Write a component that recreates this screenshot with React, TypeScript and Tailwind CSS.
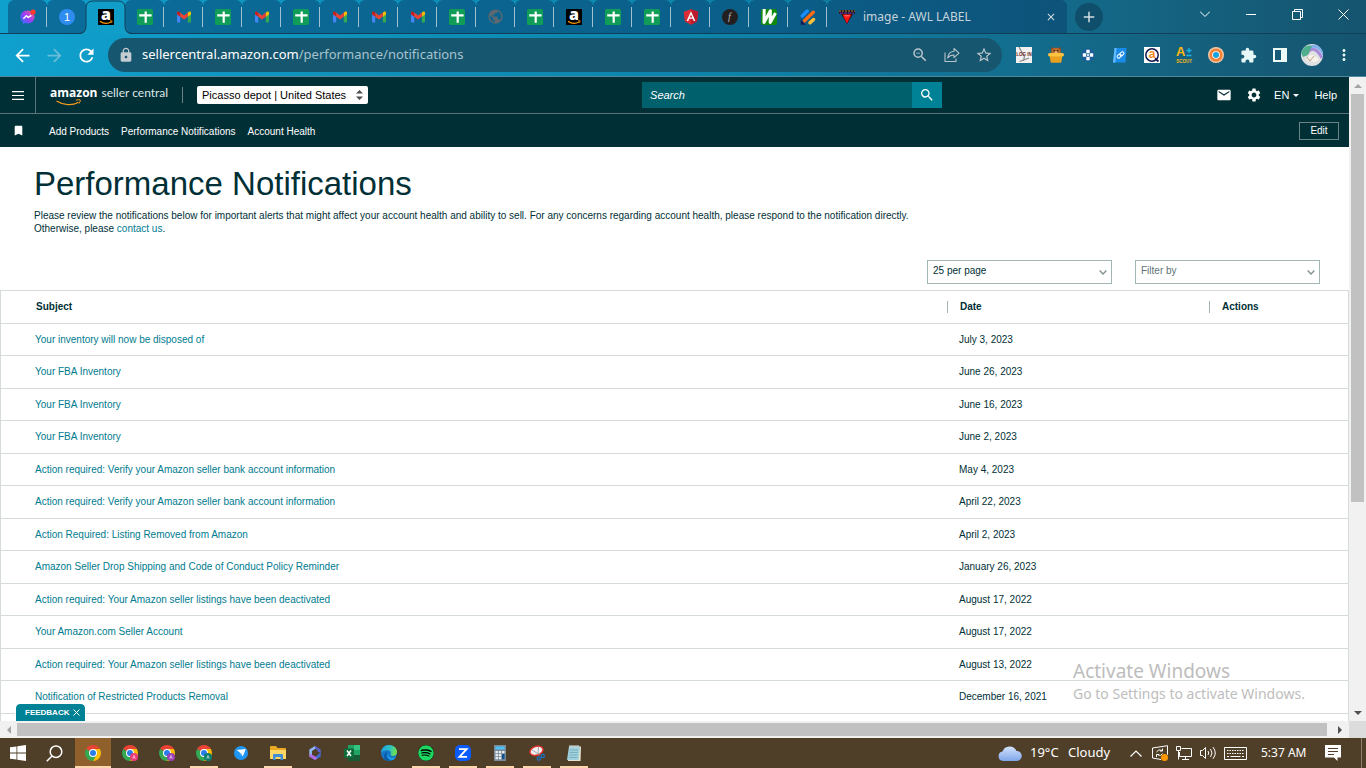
import React, { useState } from "react";
import {
  MdAdd,
  MdArrowBack,
  MdArrowForward,
  MdBookmark,
  MdClose,
  MdExtension,
  MdLock,
  MdMail,
  MdMoreVert,
  MdPublic,
  MdRefresh,
  MdSearch,
  MdSettings,
  MdStarOutline,
  MdZoomOut,
} from "react-icons/md";
import { FaSpotify } from "react-icons/fa";

/* ---------- favicons ---------- */

const SheetIcon = () => (
  <svg viewBox="0 0 16 16" className="size-4">
    <rect width="16" height="16" rx="1.6" fill="#109d58" />
    <path d="M7.6 2.4h2.2v11.4H7.6z M2.2 5.2h12.4v2.2H2.2z" fill="#fff" />
  </svg>
);

const GmailIcon = () => (
  <svg viewBox="0 0 16 16" className="size-4">
    <path d="M1 4.6 4.2 7v6.6H2a1 1 0 0 1-1-1z" fill="#4285f4" />
    <path d="M15 4.6 11.8 7v6.6H14a1 1 0 0 0 1-1z" fill="#34a853" />
    <path d="M11.8 3.6 13 2.7c.9-.6 2 0 2 1.1v1.6l-3.2 2.4z" fill="#fbbc04" />
    <path d="M4.2 3.6 3 2.7c-.9-.6-2 0-2 1.1v1.6l3.2 2.4z" fill="#c5221f" />
    <path d="M4.2 7.8V3.6L8 6.4l3.8-2.8v4.2L8 10.6z" fill="#ea4335" />
  </svg>
);

const AmazonIcon = () => (
  <svg viewBox="0 0 16 16" className="size-4 overflow-visible">
    <rect width="16" height="16" fill="#000" />
    <text x="8" y="11" textAnchor="middle" fontFamily="Open Sans, sans-serif" fontWeight="800" fontSize="16" fill="#fff">
      a
    </text>
    <path d="M2 12.2c3.6 2.6 8 2.6 11.4.5" stroke="#f90" strokeWidth="1.2" fill="none" />
    <path d="m12 11.8 2.2.1-.7 2" stroke="#f90" strokeWidth=".8" fill="none" />
  </svg>
);

const MessengerIcon = () => (
  <svg viewBox="0 0 16 16" className="size-4">
    <defs>
      <linearGradient id="msg" x1="0" y1="1" x2="1" y2="0">
        <stop offset="0" stopColor="#1f7cff" />
        <stop offset=".5" stopColor="#9a3cff" />
        <stop offset="1" stopColor="#ff5f70" />
      </linearGradient>
    </defs>
    <path d="M7.5 1.5c-4 0-7 2.900-7 6.5 0 2 .9 3.7 2.300 4.900v2.400l2.300-1.200c.8.200 1.500.3 2.400.3 4 0 7-2.800 7-6.400s-3-6.500-7-6.500z" fill="url(#msg)" />
    <path d="m3.4 9.8 2.9-3.1 2 1.7 3-2.1" stroke="#fff" strokeWidth="1.5" fill="none" strokeLinejoin="round" />
    <circle cx="13" cy="3" r="2.6" fill="#ff3b30" />
  </svg>
);

const CountIcon = () => (
  <span className="flex size-4 items-center justify-center rounded-full bg-[#2f8cf0] text-[11px] leading-4 text-white">1</span>
);

const ScriptIcon = () => (
  <span className="flex size-4 items-center justify-center rounded-full bg-[#231f20] font-['Liberation_Serif',serif] text-[10px] leading-4 text-[#b9b9b9] italic">
    f
  </span>
);

const AngularIcon = () => (
  <svg viewBox="0 0 16 16" className="size-4">
    <path d="M8 .2.7 2.7l1.2 9.800L8 15.8l6.100-3.300 1.200-9.800z" fill="#dd2c35" />
    <path d="M8 .2v15.600l6.100-3.300 1.200-9.800z" fill="#bd1c2c" />
    <path d="M8 2.2 3.600 12h1.700l.9-2.200h3.600l.9 2.200h1.700zm0 3.200 1.200 3H6.800z" fill="#fff" fillRule="evenodd" />
  </svg>
);

const WIcon = () => (
  <svg viewBox="0 0 16 16" className="size-4">
    <rect width="16" height="16" rx="2" fill="#128a0c" />
    <path d="M3.2-.2 3 13.5 9.400 1.800 9.200 13.500 14.500 4" stroke="#fff" strokeWidth="3" fill="none" strokeLinejoin="round" />
  </svg>
);

const StripesIcon = () => (
  <svg viewBox="0 0 16 16" className="size-4" strokeLinecap="round" strokeWidth="3.4">
    <path d="m2.2 7 5-5" stroke="#1a8cff" />
    <path d="M4.5 11.800 13.300 3.300" stroke="#ff6a13" />
    <path d="m10 13.800 3.500-3.300" stroke="#ffc233" />
    <path d="M.8 10.800v5h5z" fill="#101c5c" />
  </svg>
);

const AwlIcon = () => (
  <svg viewBox="0 0 16 14" className="h-3.5 w-4">
    <path d="M0 0h16v3.600H0z" fill="#1a1020" />
    <path d="M0 1h16" stroke="#c8a23a" strokeWidth=".9" strokeDasharray="2 1" />
    <path d="M1 3h14" stroke="#8a2aa8" strokeWidth="1" strokeDasharray="3 1" />
    <path d="M2 4h12L8 14z" fill="#3a0b14" />
    <path d="M3.600 4.600h8.800L8 13.400z" fill="#ff1212" />
    <path d="M5.500 5.800h5" stroke="#ff9a9a" strokeWidth=".8" />
  </svg>
);

const GlobeIcon = () => <MdPublic className="size-[17px] text-[#5d6870]" />;

type Tab = { title: string; Icon: React.FC };

const pinnedTabs: Tab[] = [
  { title: "Messenger", Icon: MessengerIcon },
  { title: "Messages", Icon: CountIcon },
  { title: "Seller Central", Icon: AmazonIcon },
  { title: "Sheet 1", Icon: SheetIcon },
  { title: "Mail 1", Icon: GmailIcon },
  { title: "Sheet 2", Icon: SheetIcon },
  { title: "Mail 2", Icon: GmailIcon },
  { title: "Sheet 3", Icon: SheetIcon },
  { title: "Mail 3", Icon: GmailIcon },
  { title: "Mail 4", Icon: GmailIcon },
  { title: "Mail 5", Icon: GmailIcon },
  { title: "Sheet 4", Icon: SheetIcon },
  { title: "New page", Icon: GlobeIcon },
  { title: "Sheet 5", Icon: SheetIcon },
  { title: "Amazon", Icon: AmazonIcon },
  { title: "Sheet 6", Icon: SheetIcon },
  { title: "Sheet 7", Icon: SheetIcon },
  { title: "Angular", Icon: AngularIcon },
  { title: "Script", Icon: ScriptIcon },
  { title: "W", Icon: WIcon },
  { title: "Stripes", Icon: StripesIcon },
];

const activeTab = 2;

function TabStrip() {
  return (
    <div className="flex h-[34px] shrink-0 border-b border-[#123f57] pl-2">
      {pinnedTabs.map(({ title, Icon }, i) =>
        i === activeTab ? (
          <button key={title} aria-label={title} className="relative z-10 -mb-px flex h-[34px] w-[39px] shrink-0 items-center justify-center">
            <svg viewBox="0 0 55 34" className="absolute top-0 -left-2 h-[34px] w-[55px]">
              <path d="M1 34q7 0 7-7V8q0-7 7-7h25q7 0 7 7v19q0 7 7 7z" fill="#109dc8" />
              <path d="M0 33.5q8 0 8-7V8q0-7 7-7h25q7 0 7 7v18.5q0 7 8 7" fill="none" stroke="#123f57" />
            </svg>
            <span className="relative">
              <Icon />
            </span>
          </button>
        ) : (
          <button key={title} aria-label={title} className="flex h-[33px] w-[39px] shrink-0 items-center rounded-t-md bg-[#083c69]/50">
            <span className="flex flex-1 justify-center pl-px">
              <Icon />
            </span>
            {i !== activeTab - 1 && <span className="h-5 w-px bg-[#9fc0cf]" />}
          </button>
        ),
      )}
      <div className="flex h-[33px] w-60 items-center rounded-t-md bg-[#083c69]/50 pl-3">
        <AwlIcon />
        <span className="ml-2 flex-1 font-['Noto_Sans',sans-serif] text-xs text-[#c6d3da]">image - AWL LABEL</span>
        <button aria-label="Close tab" className="mr-2.5">
          <MdClose className="size-3 text-[#d5dfe4]" />
        </button>
      </div>
      <button aria-label="New tab" className="mt-[3px] ml-2 flex size-7 items-center justify-center rounded-full bg-[#0f4f6c]">
        <MdAdd className="size-[18px] text-[#d5dfe4]" />
      </button>
      <div className="ml-auto flex h-7 text-white">
        <button aria-label="Search tabs" className="flex w-[46px] items-center justify-center">
          <svg viewBox="0 0 10 10" width="10" height="10" fill="none" stroke="currentColor">
            <path d="m0 2.5 5 5 5-5" />
          </svg>
        </button>
        <button aria-label="Minimise" className="flex w-[46px] items-center justify-center">
          <span className="h-px w-2.5 bg-white" />
        </button>
        <button aria-label="Restore" className="flex w-[46px] items-center justify-center">
          <svg viewBox="0 0 11 11" width="11" height="11" fill="none" stroke="currentColor">
            <path d="M.5 2.5h8v8h-8z M2.5 2.5v-2h8v8h-2" />
          </svg>
        </button>
        <button aria-label="Close" className="flex w-[46px] items-center justify-center">
          <svg viewBox="0 0 11 11" width="11" height="11" fill="none" stroke="currentColor">
            <path d="m.5.5 10 10m0-10-10 10" />
          </svg>
        </button>
      </div>
    </div>
  );
}

/* ---------- extensions ---------- */

const extensions: { name: string; art: React.ReactNode }[] = [
  {
    name: "Log in",
    art: (
      <svg viewBox="0 0 16 16" className="size-4 overflow-visible">
        <rect width="16" height="16" fill="#f1f1f1" />
        <path d="M3 0 8 9M3.5 14.5 13 11M8.5 9l-1 5" stroke="#888" strokeWidth="1.2" />
        <text x="8" y="8.5" textAnchor="middle" fontFamily="Liberation Sans, sans-serif" fontWeight="700" fontSize="4.5" fill="#6e1e1e">
          LOG IN
        </text>
      </svg>
    ),
  },
  {
    name: "Honey jar",
    art: (
      <svg viewBox="0 0 16 16" className="size-4">
        <circle cx="4.5" cy="2" r="1.7" fill="#8b4a1d" />
        <circle cx="11.5" cy="2" r="1.7" fill="#8b4a1d" />
        <path d="M3 7C3 2.5 5 .8 8 .8S13 2.5 13 7z" fill="#b5692c" />
        <circle cx="6.3" cy="3.7" r=".7" fill="#2a1508" />
        <circle cx="9.7" cy="3.7" r=".7" fill="#2a1508" />
        <ellipse cx="8" cy="5.2" rx="1.6" ry="1" fill="#e8b27c" />
        <path d="M1.5 7.5h13l-1 7q0 1.2-1.5 1.2H4q-1.5 0-1.5-1.2z" fill="#e8a21f" />
        <rect y="6" width="16" height="3.4" rx="1.7" fill="#fbc23f" />
      </svg>
    ),
  },
  {
    name: "Cross",
    art: (
      <svg viewBox="0 0 16 16" className="size-4">
        <circle cx="8" cy="8" r="6.5" fill="#1b5d9b" />
        <path d="M6.3 2.8h3.4v3.400H6.300zM6.300 9.800h3.400v3.400H6.300zM2.800 6.300h3.400v3.400H2.800zM9.800 6.300h3.400v3.400H9.800z" fill="#fff" />
        <path d="M7 7h2v2H7z" fill="#cfe4f5" />
      </svg>
    ),
  },
  {
    name: "Link book",
    art: (
      <svg viewBox="0 0 16 16" className="size-4">
        <path d="M2.500 1h12L13.500 15.500H1z" fill="#1a8be8" />
        <path d="M2.500 1 1 15.500h2.500L4.500 1z" fill="#62baff" />
        <g stroke="#fff" fill="none" strokeWidth="1" transform="rotate(-40 8.5 8)">
          <rect x="4.5" y="6.500" width="4.600" height="3" rx="1.500" />
          <rect x="8" y="6.500" width="4.600" height="3" rx="1.500" />
        </g>
      </svg>
    ),
  },
  {
    name: "Quick view",
    art: (
      <svg viewBox="0 0 16 16" className="size-4 overflow-visible">
        <rect width="16" height="16" fill="#fff" />
        <circle cx="8" cy="8" r="6.200" fill="none" stroke="#15184f" strokeWidth="1.500" />
        <path d="m11 11.500 3.500 3" stroke="#15184f" strokeWidth="1.800" />
        <text x="8" y="11.200" textAnchor="middle" fontFamily="Liberation Sans, sans-serif" fontWeight="700" fontSize="12" fill="#f5871f">
          a
        </text>
      </svg>
    ),
  },
  {
    name: "Scout",
    art: (
      <svg viewBox="0 0 16 16" className="size-4 overflow-visible">
        <text x="0" y="9" fontFamily="Liberation Sans, sans-serif" fontWeight="700" fontSize="13" fill="#fdb913">
          A
        </text>
        <path d="M13 1v5M10.500 3.500h5M10.500 8.500h5" stroke="#1db4e8" strokeWidth="1.300" />
        <text x="8" y="15.700" textAnchor="middle" fontFamily="Liberation Sans, sans-serif" fontWeight="700" fontSize="4.500" fill="#fdb913">
          SCOUT
        </text>
      </svg>
    ),
  },
  {
    name: "Ring",
    art: (
      <svg viewBox="0 0 16 16" className="size-4">
        <circle cx="8" cy="8" r="8" fill="#f6c9a4" />
        <circle cx="8" cy="8" r="6.600" fill="#f28237" />
        <circle cx="8" cy="8" r="3.800" fill="#fff" />
        <circle cx="8" cy="8" r="3" fill="#19a3dc" />
      </svg>
    ),
  },
  { name: "Extensions", art: <MdExtension className="size-[17px] text-[#e6f7f5]" /> },
  {
    name: "Side panel",
    art: (
      <svg viewBox="0 0 14 14" className="size-3.5">
        <path d="M0 0h14v14H0zM2 2v10h6V2z" fill="#eefaf8" fillRule="evenodd" />
      </svg>
    ),
  },
  {
    name: "Profile",
    art: (
      <svg viewBox="0 0 22 22" className="size-[22px]">
        <defs>
          <clipPath id="avatar">
            <circle cx="11" cy="11" r="11" />
          </clipPath>
        </defs>
        <g clipPath="url(#avatar)">
          <rect width="22" height="22" fill="#e0e0e2" />
          <path d="M6 9C10 3 16 4 21 14" stroke="#a98ad8" strokeWidth="3" fill="none" />
          <path d="M7 5C12 0 19 2 23 11" stroke="#7fb0ec" strokeWidth="3" fill="none" />
          <path d="M0 9C2 3 6 0 11 2L7 11 2 13z" fill="#4fae8c" />
          <path d="M5 16c2-5 5-6 9-4l4 3-3 3-5-1z" fill="#f7f3ea" />
          <path d="m6 13 3 4 4-5" stroke="#b3997a" strokeWidth=".9" fill="none" />
        </g>
      </svg>
    ),
  },
  { name: "Menu", art: <MdMoreVert className="size-[18px] text-[#e6f7f5]" /> },
];

function Toolbar() {
  return (
    <div className="flex h-[43px] shrink-0 items-center border-b border-[#4f87a0] pl-1.5">
      <button aria-label="Back" className="flex w-8 justify-center text-white">
        <MdArrowBack className="size-[21px]" />
      </button>
      <button aria-label="Forward" className="flex w-8 justify-center text-[#68bcd8]">
        <MdArrowForward className="size-[21px]" />
      </button>
      <button aria-label="Reload" className="flex w-8 justify-center text-white">
        <MdRefresh className="size-[21px]" />
      </button>
      <div className="ml-1.5 flex h-[34px] flex-1 items-center rounded-full bg-[#17566f] pr-0.5 pl-2.5 font-['Noto_Sans',sans-serif] text-[13px] text-[#a6c3ce]">
        <MdLock className="size-4 text-[#c4ccd2]" />
        <div className="ml-2 flex-1">
          <span className="text-white">sellercentral.amazon.com</span>/performance/notifications
        </div>
        <button aria-label="Zoom" className="flex w-8 justify-center">
          <MdZoomOut className="size-[18px] text-[#b6c3ca]" />
        </button>
        <button aria-label="Share" className="flex w-8 justify-center">
          <svg viewBox="0 0 16 16" className="size-4" fill="none" stroke="#b6c3ca" strokeWidth="1.1" strokeLinejoin="round">
            <path d="M1 5.500v9h11v-3" />
            <path d="M10 1.500v2.700C6.500 4.500 4.200 6.700 3.600 11c1.700-2.200 3.600-3 6.400-3v2.700l5-4.600z" />
          </svg>
        </button>
        <button aria-label="Bookmark" className="flex w-8 justify-center">
          <MdStarOutline className="size-[18px] text-[#b6c3ca]" />
        </button>
      </div>
      <div className="mr-1.5 ml-1.5 flex">
        {extensions.map(({ name, art }) => (
          <button key={name} aria-label={name} className="flex h-6 w-8 items-center justify-center">
            {art}
          </button>
        ))}
      </div>
    </div>
  );
}

/* ---------- seller central page ---------- */

function SiteHeader() {
  return (
    <header className="bg-[#002f36] text-white">
      <div className="flex h-[37px] items-stretch justify-between border-b border-[#5b7379]">
        <div className="flex items-center">
          <button aria-label="Menu" className="flex w-9 items-center justify-center self-stretch border-r border-[#5b7379]">
            <svg viewBox="0 0 12 9" width="12" height="9" fill="#fff">
              <path d="M0 0h12v1.200H0zM0 3.900h12v1.200H0zM0 7.800h12V9H0z" />
            </svg>
          </button>
          <a href="#home" className="relative ml-3.5 flex h-5 w-[118px] items-baseline gap-1 whitespace-nowrap">
            <span className="font-['Open_Sans',sans-serif] text-xs leading-4 font-bold">amazon</span>
            <span className="font-['Lato',sans-serif] text-xs leading-4 text-[#dfe5e6]">seller central</span>
            <svg viewBox="0 0 26 7" className="absolute top-[14px] left-1.5 h-[7px] w-[26px]" fill="none" stroke="#f79a1c">
              <path d="M.5 2c7 4.500 16 4.800 22 1.200" strokeWidth="1.300" />
              <path d="M20 1.200q4-1 4.300-.2.300 1-1.300 3.600" />
            </svg>
          </a>
          <span className="ml-3.5 h-4 w-px bg-[#6d8287]" />
          <label className="relative ml-3.5 flex">
            <span className="sr-only">Store</span>
            <select className="h-[18px] w-[171px] appearance-none rounded-xs bg-white pl-[5px] text-[11px] leading-4 text-black">
              <option>Picasso depot | United States</option>
            </select>
            <svg viewBox="0 0 9 12" className="pointer-events-none absolute top-[3px] right-1 h-3 w-[9px]" fill="#4d4d4d">
              <path d="M4.500 1 8 4.500H1zM4.500 11 1 7.500h7z" />
            </svg>
          </label>
        </div>
        <form className="flex h-[26px] w-[300px] self-center" onSubmit={(e) => e.preventDefault()}>
          <input
            aria-label="Search"
            placeholder="Search"
            className="w-0 flex-1 bg-[#00606c] px-2 text-[11px] text-white italic placeholder:text-white"
          />
          <button aria-label="Go" className="flex w-[30px] items-center justify-center bg-[#008296]">
            <MdSearch className="size-4" />
          </button>
        </form>
        <div className="flex items-center pr-3 text-[11px]">
          <button aria-label="Messages" className="mr-3.5">
            <MdMail className="size-4" />
          </button>
          <button aria-label="Settings" className="mr-3">
            <MdSettings className="size-4" />
          </button>
          <button className="mr-[15px] flex items-center gap-1">
            EN
            <svg viewBox="0 0 6 3" className="h-[3px] w-1.5" fill="#fff">
              <path d="M0 0h6L3 3z" />
            </svg>
          </button>
          <a href="#help">Help</a>
        </div>
      </div>
      <nav className="flex h-[33px] items-center pr-2.5 text-[10px]">
        <MdBookmark className="mr-6 ml-3 size-[13px]" />
        <div className="flex gap-3 pt-px">
          <a href="#add">Add Products</a>
          <a href="#performance">Performance Notifications</a>
          <a href="#health">Account Health</a>
        </div>
        <button className="ml-auto h-[18px] w-10 border border-[#6b8287] leading-4">Edit</button>
      </nav>
    </header>
  );
}

const notifications: [string, string][] = [
  ["Your inventory will now be disposed of", "July 3, 2023"],
  ["Your FBA Inventory", "June 26, 2023"],
  ["Your FBA Inventory", "June 16, 2023"],
  ["Your FBA Inventory", "June 2, 2023"],
  ["Action required: Verify your Amazon seller bank account information", "May 4, 2023"],
  ["Action required: Verify your Amazon seller bank account information", "April 22, 2023"],
  ["Action Required: Listing Removed from Amazon", "April 2, 2023"],
  ["Amazon Seller Drop Shipping and Code of Conduct Policy Reminder", "January 26, 2023"],
  ["Action required: Your Amazon seller listings have been deactivated", "August 17, 2022"],
  ["Your Amazon.com Seller Account", "August 17, 2022"],
  ["Action required: Your Amazon seller listings have been deactivated", "August 13, 2022"],
  ["Notification of Restricted Products Removal", "December 16, 2021"],
];

function PickList({ label, options, muted }: { label: string; options: string[]; muted?: boolean }) {
  return (
    <label className="relative flex">
      <span className="sr-only">{label}</span>
      <select
        className={`h-6 w-[185px] appearance-none border border-[#a2b5b5] bg-white pb-1 pl-[5px] text-[10px] ${
          muted ? "text-[#5f7377]" : "text-[#002f36]"
        }`}
      >
        {options.map((o) => (
          <option key={o}>{o}</option>
        ))}
      </select>
      <svg viewBox="0 0 8 5" className="pointer-events-none absolute top-2.5 right-[5px] h-[5px] w-2" fill="none" stroke="#819093" strokeWidth="1.4">
        <path d="m.6.6 3.4 3.4L7.4.6" />
      </svg>
    </label>
  );
}

function HeadCell({ children, divided }: { children: string; divided?: boolean }) {
  return (
    <th className="p-0 text-left font-bold">
      <span className={divided ? "block border-l border-[#a2b5b5] pl-3 leading-3" : "block pl-[35px] leading-3"}>{children}</span>
    </th>
  );
}

function Notifications() {
  return (
    <section className="flex min-h-0 flex-1 flex-col text-[10px] text-[#002f36]">
      <h1 className="mt-4 ml-[34px] text-[33px] leading-[42px]">Performance Notifications</h1>
      <p className="mt-1 ml-[34px] max-w-[900px] leading-[13px]">
        Please review the notifications below for important alerts that might affect your account health and ability to sell. For any
        concerns regarding account health, please respond to the notification directly.
        <br />
        Otherwise, please{" "}
        <a href="#contact" className="text-[#007b8f]">
          contact us
        </a>
        .
      </p>
      <div className="mt-[25px] mr-[29px] mb-1.5 flex justify-end gap-[23px]">
        <PickList label="Rows per page" options={["25 per page", "50 per page"]} />
        <PickList label="Filter" options={["Filter by", "Subject"]} muted />
      </div>
      <div className="min-h-0 flex-1 overflow-hidden border-x border-t border-[#d5dbdb]">
        <table className="w-full table-fixed border-collapse">
          <colgroup>
            <col />
            <col className="w-[262px]" />
            <col className="w-[139px]" />
          </colgroup>
          <thead>
            <tr className="h-8 border-b border-[#d5dbdb]">
              <HeadCell>Subject</HeadCell>
              <HeadCell divided>Date</HeadCell>
              <HeadCell divided>Actions</HeadCell>
            </tr>
          </thead>
          <tbody>
            {notifications.map(([subject, date], i) => (
              <tr key={i} className="border-b border-[#d5dbdb] odd:h-8 even:h-[33px]">
                <td className="p-0 pl-[34px]">
                  <a href="#notification" className="text-[#007b8f]">
                    {subject}
                  </a>
                </td>
                <td className="p-0 pl-3">{date}</td>
                <td className="p-0" />
              </tr>
            ))}
          </tbody>
        </table>
      </div>
    </section>
  );
}

/* ---------- taskbar ---------- */

const Chrome = ({ badge }: { badge?: string }) => (
  <svg viewBox="0 0 16 16" className="size-4">
    <path d="M8 8 1.100 4A8 8 0 0 1 14.900 4z" fill="#ea4335" />
    <path d="M8 8 1.100 4A8 8 0 0 0 8 16l3.500-6z" fill="#34a853" />
    <path d="M8 4h6.900A8 8 0 0 1 8 16l3.500-6z" fill="#fbbc05" />
    <circle cx="8" cy="8" r="4" fill="#fff" />
    <circle cx="8" cy="8" r="3" fill="#2b7de9" />
    {badge && (
      <>
        <circle cx="12" cy="12" r="4" fill={badge} />
        <path d="m10.600 13.800 1.400-3.500 1.400 3.500m-2.300-1.200h1.800" stroke="#fff" strokeWidth=".5" fill="none" />
      </>
    )}
  </svg>
);

const apps: { name: string; state?: "active" | "open"; art: React.ReactNode }[] = [
  { name: "Chrome", state: "active", art: <Chrome /> },
  { name: "Chrome profile 2", art: <Chrome badge="#ec3b78" /> },
  { name: "Chrome profile 3", art: <Chrome badge="#9a3fb5" /> },
  { name: "Chrome profile 4", state: "open", art: <Chrome badge="#0b7d6c" /> },
  {
    name: "Bird mail",
    art: (
      <svg viewBox="0 0 16 16" className="size-3.5">
        <circle cx="8" cy="8" r="8" fill="#1f96f3" />
        <path d="M3 4.500 13.500 3.500 10 12 8 8.500z" fill="#fff" />
        <path d="M8 8.500 13.500 3.500 6.500 11z" fill="#bfe0fb" />
      </svg>
    ),
  },
  {
    name: "File Explorer",
    state: "open",
    art: (
      <svg viewBox="0 0 16 14" className="h-3.5 w-4">
        <path d="M0 1q0-1 1-1h5l1.500 2H15q1 0 1 1v10H0z" fill="#e9a922" />
        <path d="M0 4h16v9H0z" fill="#ffd764" />
        <path d="M3 14V9q0-1 1-1h8q1 0 1 1v5h-2.500v-3h-5v3z" fill="#3f8fd8" />
      </svg>
    ),
  },
  {
    name: "Microsoft 365",
    art: (
      <svg viewBox="0 0 16 16" className="size-3.5">
        <path d="M8 0 1.500 4v8l3 1.700V5.800L10 2z" fill="#8fb7f2" />
        <path d="m8 0 6.500 4v4L11 6.200V4.500L8 3z" fill="#5b62d6" />
        <path d="M14.500 7v5L8 16l-5-3 5-.5 3-2z" fill="#3e6fd8" />
        <path d="M1.500 9v3L8 16l3-2-5-3.500z" fill="#b16be0" />
      </svg>
    ),
  },
  {
    name: "Excel",
    art: (
      <svg viewBox="0 0 16 16" className="size-4">
        <path d="M4 0h12v16H4z" fill="#21a366" />
        <path d="M10 0h6v5h-6z" fill="#33c481" />
        <path d="M4 5h6v5H4z" fill="#107c41" />
        <path d="M4 10h12v6H4z" fill="#185c37" />
        <path d="M0 3.500h10v9.500H0z" fill="#0e6b38" />
        <path d="m3 5.500 4 5.500m0-5.500L3 11" stroke="#fff" strokeWidth="1.500" />
      </svg>
    ),
  },
  {
    name: "Edge",
    art: (
      <svg viewBox="0 0 16 16" className="size-4">
        <defs>
          <linearGradient id="edge" x1="0" y1="0" x2="1" y2=".2">
            <stop offset="0" stopColor="#1f9fe8" />
            <stop offset=".6" stopColor="#2dc3c0" />
            <stop offset="1" stopColor="#6be04e" />
          </linearGradient>
        </defs>
        <circle cx="8" cy="8" r="8" fill="#1478c9" />
        <path d="M0 8C.3 3.500 3.700 0 8 0c4.500 0 8 3.200 8 7 0 2.500-1.800 4-4 4-1.700 0-2.800-.8-2.400-1.500C10.500 8 9.800 5.200 6.500 5.200 3 5.200.3 6.500 0 8z" fill="url(#edge)" />
        <path d="M5.500 9.500C5.200 13 8 15.200 11.500 14.800 9.500 16.300 6 16.200 4 14.500 2 12.500 3 7.500 6.500 6.500 5.800 7.500 5.500 8.500 5.500 9.500z" fill="#0c59a4" />
        <path d="M6.500 9c.5 3.500 4.500 5 8.300 3.300-.8 1.500-2 2.500-3.300 2.700C8 15.200 5.500 12.500 6.500 9z" fill="#1da1e6" />
      </svg>
    ),
  },
  {
    name: "Spotify",
    state: "open",
    art: (
      <span className="rounded-full bg-black">
        <FaSpotify className="size-4 text-[#1ed760]" />
      </span>
    ),
  },
  {
    name: "Zoom",
    state: "open",
    art: (
      <svg viewBox="0 0 16 16" className="size-4">
        <rect width="16" height="16" rx="5" fill="#0b5cff" />
        <path d="M4 4.200h7.600L4.500 11.800H12" stroke="#fff" strokeWidth="1.800" fill="none" />
      </svg>
    ),
  },
  {
    name: "Calculator",
    state: "open",
    art: (
      <svg viewBox="0 0 12 16" className="h-4 w-3">
        <path d="M0 0h12v16H0z" fill="#7b8a97" />
        <path d="M1.500 1.500h9v3h-9z" fill="#4fc0f5" />
        <path d="M1.500 6h2.400v2.200H1.500zM4.800 6h2.400v2.200H4.800zM8.100 6h2.400v2.200H8.100zM1.500 9h2.400v2.200H1.500zM4.800 9h2.400v2.200H4.800zM1.500 12h2.400v2.200H1.500zM4.800 12h2.400v2.200H4.800z" fill="#e8edf1" />
        <path d="M8.100 9h2.400v5.200H8.100z" fill="#0d4f94" />
      </svg>
    ),
  },
  {
    name: "Snip",
    state: "open",
    art: (
      <svg viewBox="0 0 16 16" className="size-4">
        <ellipse cx="7.500" cy="5.800" rx="6.700" ry="4.400" transform="rotate(-18 7.500 5.800)" fill="#f4f1f1" stroke="#d9312b" strokeWidth="1.500" />
        <path d="m3 5 8 5M9.500 2 9 9" stroke="#9aa0a6" strokeWidth=".9" />
        <circle cx="9.800" cy="13.500" r="1.700" fill="none" stroke="#1b74c4" strokeWidth="1.200" />
        <circle cx="13.800" cy="11" r="1.600" fill="none" stroke="#1b74c4" strokeWidth="1.200" />
      </svg>
    ),
  },
  {
    name: "Notepad",
    state: "open",
    art: (
      <svg viewBox="0 0 16 16" className="size-4">
        <path d="M3.500 1.500H15L14.500 16H2z" fill="#e9e4cf" />
        <path d="M3 1.500h11L12.500 15H1z" fill="#9fd0dc" />
        <path d="M4 5h8M3.800 7.500h8M3.500 10h8M3.200 12.500h8" stroke="#6fa9b8" strokeWidth=".8" />
        <path d="M4 0v2.500M6 0v2.500M8 0v2.500M10 0v2.500M12 0v2.500" stroke="#dfe6e8" />
      </svg>
    ),
  },
];

function Taskbar() {
  return (
    <footer className="flex h-[30px] shrink-0 items-center bg-[#503f28] font-['Noto_Sans',sans-serif] text-white">
      <button aria-label="Start" className="flex w-9 justify-center">
        <svg viewBox="0 0 16 16" className="size-4" fill="#fff">
          <path d="M0 2.300 6.500 1.400v6.200H0zM7.300 1.300 16 0v7.600H7.300zM0 8.400h6.500v6.200L0 13.700zM7.300 8.400H16V16l-8.700-1.300z" />
        </svg>
      </button>
      <button aria-label="Search" className="mr-0.5 flex w-[37px] justify-center">
        <svg viewBox="0 0 17 17" width="17" height="17" fill="none" stroke="#fff" strokeWidth="1.500">
          <circle cx="10" cy="6.700" r="5.800" />
          <path d="M6 11 .8 16.200" />
        </svg>
      </button>
      <div className="flex gap-px self-stretch">
        {apps.map(({ name, state, art }) => (
          <button
            key={name}
            aria-label={name}
            className={`flex w-9 flex-col items-center ${state === "active" ? "bg-[#8f602b]" : ""}`}
          >
            <span className="flex flex-1 items-center pt-0.5">{art}</span>
            <span className={`h-0.5 ${state === "active" ? "w-full bg-[#ffd7ae]" : state === "open" ? "w-7 bg-[#ffd7ae]" : "w-7"}`} />
          </button>
        ))}
      </div>
      <div className="ml-auto flex items-center">
        <svg viewBox="0 0 24 16" className="h-4 w-6">
          <defs>
            <linearGradient id="cloud" x1="0" y1="0" x2="0" y2="1">
              <stop offset="0" stopColor="#d4e3fb" />
              <stop offset="1" stopColor="#7fa6ea" />
            </linearGradient>
          </defs>
          <path d="M5 16a4.800 4.800 0 0 1-.5-9.500A7.500 7.500 0 0 1 18.500 6 5 5 0 0 1 19 16z" fill="url(#cloud)" />
        </svg>
        <span className="ml-2 w-[38px] text-[13px]">19°C</span>
        <span className="w-[62px] text-[13px]">Cloudy</span>
        <svg viewBox="0 0 12 7" className="h-[7px] w-3" fill="none" stroke="#fff" strokeWidth="1.2">
          <path d="m.5 6.500 5.500-5.500 5.500 5.500" />
        </svg>
        <svg viewBox="0 0 16 16" className="ml-2.5 size-4" fill="none" stroke="#fff">
          <path d="M.5 3 15.500.7v9M9 14.500.5 13V3" />
          <path d="M4.500 7q2-3.500 5.500-1.500m.5-2v2.500H8M10.500 8.500q-1.500 3-4.500 1.500M4.500 12v-2.500H7" />
          <circle cx="12.500" cy="12.500" r="3.500" fill="#ff9800" stroke="none" />
        </svg>
        <svg viewBox="0 0 16 15" className="ml-2 h-[15px] w-4" fill="none" stroke="#fff">
          <path d="M5.500 2.500h10v8h-12V6M9.500 10.500v3M6 13.500h7M.5.5h4v4h-4zM2.500 4.500v9" />
        </svg>
        <svg viewBox="0 0 17 14" className="ml-2 h-3.5 w-[17px]" fill="none" stroke="#fff">
          <path d="M.5 4.500h2l3-3v11l-3-3h-2zM8 5q1.500 2 0 4M10.500 3q3 4 0 8M13 1.200q4.500 5.800 0 11.600" />
        </svg>
        <svg viewBox="0 0 23 13" className="ml-[7px] h-[13px] w-[23px]" fill="none" stroke="#fff">
          <path d="M.5.5h22v12H.5z" />
          <path d="M3 3.500h17M3 6.500h17" strokeDasharray="1.500 1" />
          <path d="M3 9.500h2M6.500 9.500h10M18 9.500h2" />
        </svg>
        <span className="ml-3.5 w-16 text-xs">5:37 AM</span>
        <svg viewBox="0 0 16 16" className="size-4">
          <path d="M0 0h16v12.500h-3.500V16L9 12.500H0z" fill="#fff" />
          <path d="M3 3.500h10M3 6.500h10M3 9.500h6" stroke="#503f28" />
        </svg>
        <span className="mr-1 ml-5 h-[30px] w-px bg-[#8c8070]" />
      </div>
    </footer>
  );
}

export default function App() {
  const [feedback, setFeedback] = useState(true);
  return (
    <div className="relative flex h-screen flex-col overflow-hidden bg-white font-['Liberation_Sans',Arial,sans-serif]">
      <div className="shrink-0 bg-linear-to-r from-[#10a0cd] via-[#0d82a8] via-55% to-[#15546e]">
        <TabStrip />
        <Toolbar />
      </div>
      <div className="flex min-h-0 flex-1">
        <main className="relative flex min-w-0 flex-1 flex-col overflow-hidden">
          <SiteHeader />
          <Notifications />
          {feedback && (
            <div className="absolute bottom-0 left-4 flex h-[17px] items-center gap-1 rounded-t-sm bg-[#008296] pr-[5px] pl-[9px] text-[8px] font-bold text-white outline outline-white">
              <button>FEEDBACK</button>
              <button aria-label="Close feedback" onClick={() => setFeedback(false)}>
                <svg viewBox="0 0 7 7" width="7" height="7" stroke="#fff">
                  <path d="m.5.5 6 6m0-6-6 6" />
                </svg>
              </button>
            </div>
          )}
        </main>
        <div className="flex w-[17px] flex-col items-center bg-[#f1f1f1]">
          <span className="flex h-[17px] items-center">
            <svg viewBox="0 0 8 4" className="h-1 w-2" fill="#a3a3a3">
              <path d="M4 0 8 4H0z" />
            </svg>
          </span>
          <span className="h-[408px] w-[13px] bg-[#c1c1c1]" />
          <span className="mt-auto flex h-[17px] items-center">
            <svg viewBox="0 0 8 4" className="h-1 w-2" fill="#505050">
              <path d="M4 4 8 0H0z" />
            </svg>
          </span>
        </div>
      </div>
      <div className="flex h-[17px] shrink-0 items-center bg-[#f1f1f1]">
        <span className="flex w-[17px] justify-center">
          <svg viewBox="0 0 4 8" className="h-2 w-1" fill="#a3a3a3">
            <path d="M0 4 4 0v8z" />
          </svg>
        </span>
        <span className="h-[13px] flex-1 bg-[#c1c1c1]" />
        <span className="flex w-[22px] justify-center pl-1">
          <svg viewBox="0 0 4 8" className="h-2 w-1" fill="#505050">
            <path d="M4 4 0 0v8z" />
          </svg>
        </span>
        <span className="h-[17px] w-[17px] bg-[#dcdcdc]" />
      </div>
      <Taskbar />
      <div className="pointer-events-none absolute right-[53px] bottom-[63px] w-60 font-['Noto_Sans',sans-serif] text-[#bdbdbd]">
        <p className="text-[19px] leading-[23px]">Activate Windows</p>
        <p className="text-sm leading-[22px]">Go to Settings to activate Windows.</p>
      </div>
    </div>
  );
}
